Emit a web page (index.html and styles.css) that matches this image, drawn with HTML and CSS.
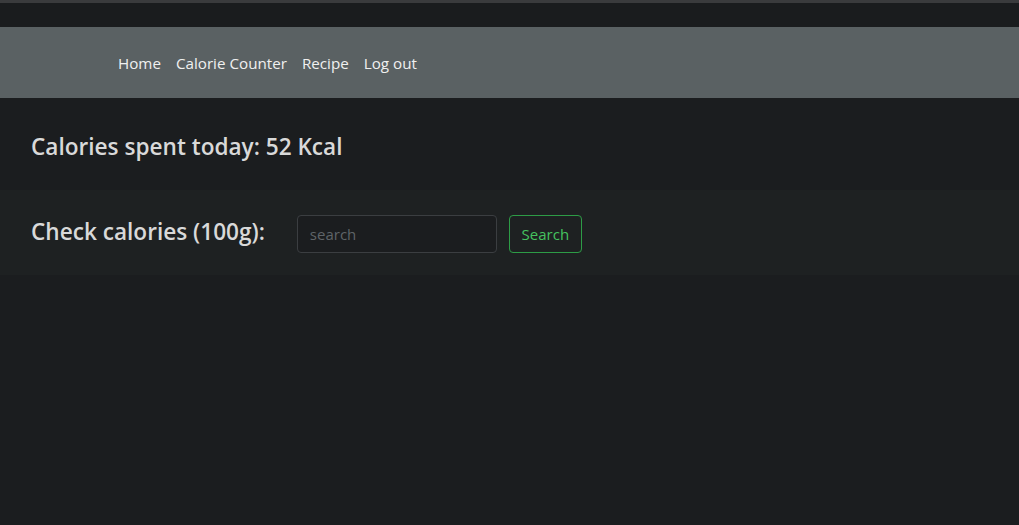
FILE: index.html
```html
<!DOCTYPE html>
<html lang="en">
<head>
<meta charset="utf-8">
<title>Calorie Counter</title>
<link rel="stylesheet" href="styles.css">
</head>
<body>
<div class="topstrip"></div>
<div class="topbar"></div>
<nav class="nav">
  <a href="#" class="nav-link">Home</a>
  <a href="#" class="nav-link">Calorie Counter</a>
  <a href="#" class="nav-link">Recipe</a>
  <a href="#" class="nav-link">Log out</a>
</nav>
<section class="spent">
  <h2 class="title">Calories spent today: 52 Kcal</h2>
</section>
<section class="check">
  <h2 class="title title-check">Check calories (100g):</h2>
  <form class="search-form">
    <input class="search-input" type="text" placeholder="search">
    <button class="search-btn" type="button">Search</button>
  </form>
</section>
</body>
</html>
```
FILE: styles.css
```css
html, body {
  margin: 0;
  padding: 0;
  background: #1b1d1f;
  font-family: "Open Sans", "Noto Sans", sans-serif;
  color: #d6d6d6;
}
.topstrip {
  height: 3px;
  background: #3a3b3d;
}
.topbar {
  height: 24px;
  background: #1a1c1e;
}
.nav {
  height: 71px;
  background: #5a6163;
  display: flex;
  align-items: center;
  gap: 15px;
  padding-left: 118px;
}
.nav-link {
  color: #f0f0f0;
  text-decoration: none;
  font-size: 15.2px;
}
.spent {
  height: 92px;
  box-sizing: border-box;
  padding-top: 4px;
  display: flex;
  align-items: center;
  padding-left: 31px;
}
.title {
  margin: 0;
  font-size: 22.6px;
  font-weight: 600;
  color: #d9d9d9;
}
.title-check {
  margin-bottom: 3px;
}
.check {
  height: 85px;
  background: #1e2122;
  display: flex;
  align-items: center;
  padding-left: 31px;
  gap: 32px;
}
.search-form {
  display: flex;
  gap: 12px;
  margin-top: 2px;
}
.search-input {
  width: 200px;
  height: 38px;
  box-sizing: border-box;
  background: #1b1d1f;
  border: 1px solid #3b3e41;
  border-radius: 4px;
  padding: 0 12px;
  font-family: inherit;
  font-size: 15px;
  color: #ccc;
}
.search-input::placeholder {
  color: #5f6468;
}
.search-btn {
  height: 38px;
  width: 73px;
  box-sizing: border-box;
  background: transparent;
  border: 1px solid #2d9c46;
  border-radius: 4px;
  color: #45c25f;
  font-family: inherit;
  font-size: 15px;
}
```
